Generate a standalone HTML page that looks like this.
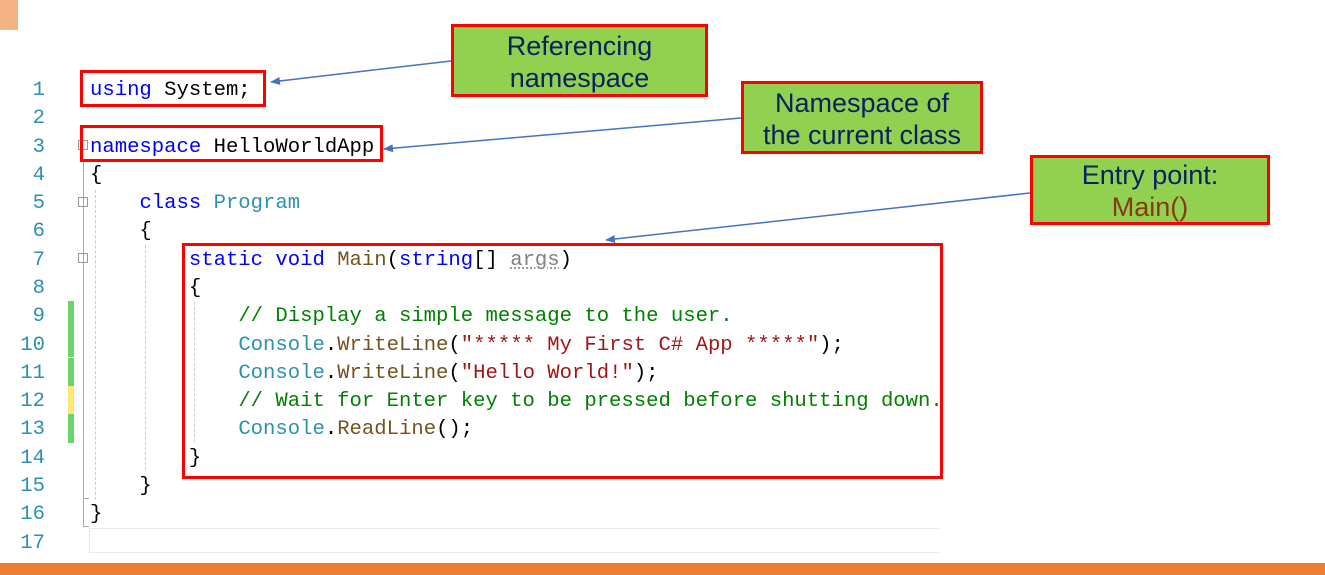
<!DOCTYPE html>
<html><head><style>
body{margin:0;width:1325px;height:575px;background:#fff;position:relative;overflow:hidden;font-family:"Liberation Sans",sans-serif}
.ln{position:absolute;left:0;width:45px;text-align:right;font:20.6px/28px "Liberation Mono",monospace;color:#2b91af;margin-top:2px}
.cl{position:absolute;left:90px;font:20.6px/28px "Liberation Mono",monospace;color:#000;white-space:pre;margin-top:2px}
.k{color:#0000ff}.t{color:#2b91af}.m{color:#74531f}.s{color:#a31515}.c{color:#008000}.g{color:#808080;text-decoration:underline dotted #999}
.rb{position:absolute;border:3px solid #f00;box-sizing:border-box}
.gb{position:absolute;border:3px solid #f00;background:#92d050;box-sizing:border-box;text-align:center;color:#0b2160;font-size:27px;line-height:32px;padding-top:3px}
.bar{position:absolute;left:68px;width:6px}
</style></head><body>
<div style="position:absolute;left:0;top:0;width:18px;height:30px;background:#f4b183"></div>
<div style="position:absolute;left:0;top:563px;width:1325px;height:12px;background:#ed7d31"></div>

<div class="bar" style="top:301px;height:56px;background:#6ad66a"></div>
<div class="bar" style="top:358px;height:28px;background:#6ad66a"></div>
<div class="bar" style="top:386px;height:28px;background:#ffe86b"></div>
<div class="bar" style="top:414px;height:29px;background:#6ad66a"></div>

<div style="position:absolute;left:83px;top:160px;width:1px;height:366px;background:#aaa"></div>
<div style="position:absolute;left:83px;top:526px;width:6px;height:1px;background:#aaa"></div>
<div style="position:absolute;left:83px;top:498px;width:6px;height:1px;background:#aaa"></div>
<div style="position:absolute;left:95px;top:190px;width:0;height:310px;border-left:1px dashed #ccc"></div>
<div style="position:absolute;left:145px;top:245px;width:0;height:225px;border-left:1px dashed #ccc"></div>
<div style="position:absolute;left:194px;top:302px;width:0;height:140px;border-left:1px dashed #ccc"></div>
<div style="position:absolute;left:78px;top:140px;width:8px;height:8px;border:1px solid #999;font-size:0"></div>
<div style="position:absolute;left:78px;top:197px;width:8px;height:8px;border:1px solid #999"></div>
<div style="position:absolute;left:78px;top:253px;width:8px;height:8px;border:1px solid #999"></div>
<div style="position:absolute;left:89px;top:528px;width:850px;height:25px;border:1px solid #e8e8f0;border-right:none;box-sizing:border-box"></div>

<div class="ln" style="top:75px">1</div>
<div class="ln" style="top:103px">2</div>
<div class="ln" style="top:132px">3</div>
<div class="ln" style="top:160px">4</div>
<div class="ln" style="top:188px">5</div>
<div class="ln" style="top:216px">6</div>
<div class="ln" style="top:245px">7</div>
<div class="ln" style="top:273px">8</div>
<div class="ln" style="top:301px">9</div>
<div class="ln" style="top:330px">10</div>
<div class="ln" style="top:358px">11</div>
<div class="ln" style="top:386px">12</div>
<div class="ln" style="top:414px">13</div>
<div class="ln" style="top:443px">14</div>
<div class="ln" style="top:471px">15</div>
<div class="ln" style="top:499px">16</div>
<div class="ln" style="top:528px">17</div>

<div class="cl" style="top:75px"><span class="k">using</span> System;</div>
<div class="cl" style="top:132px"><span class="k">namespace</span> HelloWorldApp</div>
<div class="cl" style="top:160px">{</div>
<div class="cl" style="top:188px">    <span class="k">class</span> <span class="t">Program</span></div>
<div class="cl" style="top:216px">    {</div>
<div class="cl" style="top:245px">        <span class="k">static</span> <span class="k">void</span> <span class="m">Main</span>(<span class="k">string</span>[] <span class="g">args</span>)</div>
<div class="cl" style="top:273px">        {</div>
<div class="cl" style="top:301px">            <span class="c">// Display a simple message to the user.</span></div>
<div class="cl" style="top:330px">            <span class="t">Console</span>.<span class="m">WriteLine</span>(<span class="s">"***** My First C# App *****"</span>);</div>
<div class="cl" style="top:358px">            <span class="t">Console</span>.<span class="m">WriteLine</span>(<span class="s">"Hello World!"</span>);</div>
<div class="cl" style="top:386px">            <span class="c">// Wait for Enter key to be pressed before shutting down.</span></div>
<div class="cl" style="top:414px">            <span class="t">Console</span>.<span class="m">ReadLine</span>();</div>
<div class="cl" style="top:443px">        }</div>
<div class="cl" style="top:471px">    }</div>
<div class="cl" style="top:499px">}</div>

<div class="rb" style="left:80px;top:70px;width:186px;height:37px"></div>
<div class="rb" style="left:80px;top:125px;width:303px;height:37px"></div>
<div class="rb" style="left:182px;top:243px;width:761px;height:236px"></div>

<div class="gb" style="left:451px;top:24px;width:257px;height:73px">Referencing<br>namespace</div>
<div class="gb" style="left:741px;top:81px;width:242px;height:73px">Namespace of<br>the current class</div>
<div class="gb" style="left:1030px;top:155px;width:240px;height:70px;padding-top:1px">Entry point:<br><span style="color:#843c0c">Main()</span></div>

<svg style="position:absolute;left:0;top:0" width="1325" height="575">
<defs><marker id="a" markerWidth="10" markerHeight="8" refX="9" refY="4" orient="auto" markerUnits="userSpaceOnUse"><path d="M0,0 L10,4 L0,8 Z" fill="#4472c4"/></marker></defs>
<g stroke="#4472c4" stroke-width="1.5" fill="none" marker-end="url(#a)">
<line x1="451" y1="61" x2="271" y2="82"/>
<line x1="741" y1="118" x2="384" y2="149"/>
<line x1="1030" y1="193" x2="606" y2="240"/>
</g></svg>
</body></html>
